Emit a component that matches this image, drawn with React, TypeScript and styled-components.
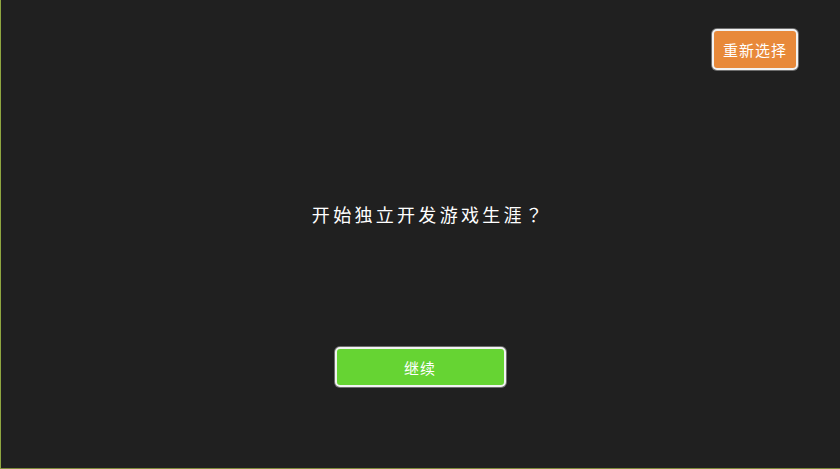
import styled, { createGlobalStyle } from "styled-components";

const GlobalStyle = createGlobalStyle`
  html, body {
    margin: 0;
    padding: 0;
    background: #202020;
  }
  body {
    font-family: "Noto Sans CJK SC", "Noto Sans", sans-serif;
  }
`;

const Screen = styled.div`
  box-sizing: border-box;
  width: 840px;
  height: 469px;
  background: #202020;
  border-left: 1px solid #8fa640;
  border-bottom: 1px solid #7d8a3c;
  display: flex;
  flex-direction: column;
  align-items: center;
  padding-top: 29px;
`;

const TopBar = styled.div`
  align-self: stretch;
  display: flex;
  justify-content: flex-end;
  padding-right: 42px;
`;

const Button = styled.button<{ $color: string; $width: number; $height: number }>`
  box-sizing: border-box;
  width: ${(p) => p.$width}px;
  height: ${(p) => p.$height}px;
  background: ${(p) => p.$color};
  border: 2px solid #f2f2f2;
  border-radius: 5px;
  box-shadow: 0 0 0 1px rgba(255, 255, 255, 0.35);
  color: #ffffff;
  font-family: "Noto Sans CJK SC", "Noto Sans", sans-serif;
  font-size: 15px;
  letter-spacing: 1px;
  display: flex;
  align-items: center;
  justify-content: center;
  padding: 0;
  cursor: pointer;
`;

const Title = styled.h1`
  margin: 131px 0 0 0;
  height: 27px;
  line-height: 27px;
  color: #ffffff;
  font-family: "Noto Sans CJK JP", "Noto Sans CJK SC", sans-serif;
  font-size: 18px;
  font-weight: 400;
  letter-spacing: 3.3px;
  padding-left: 17px;
`;

const Footer = styled.div`
  margin-top: 119px;
  display: flex;
  justify-content: center;
  padding-right: 1px;
`;

export default function App() {
  return (
    <>
      <GlobalStyle />
      <Screen>
        <TopBar>
          <Button $color="#e8893a" $width={86} $height={41}>
            重新选择
          </Button>
        </TopBar>
        <Title>开始独立开发游戏生涯？</Title>
        <Footer>
          <Button $color="#66d433" $width={171} $height={40}>
            继续
          </Button>
        </Footer>
      </Screen>
    </>
  );
}
